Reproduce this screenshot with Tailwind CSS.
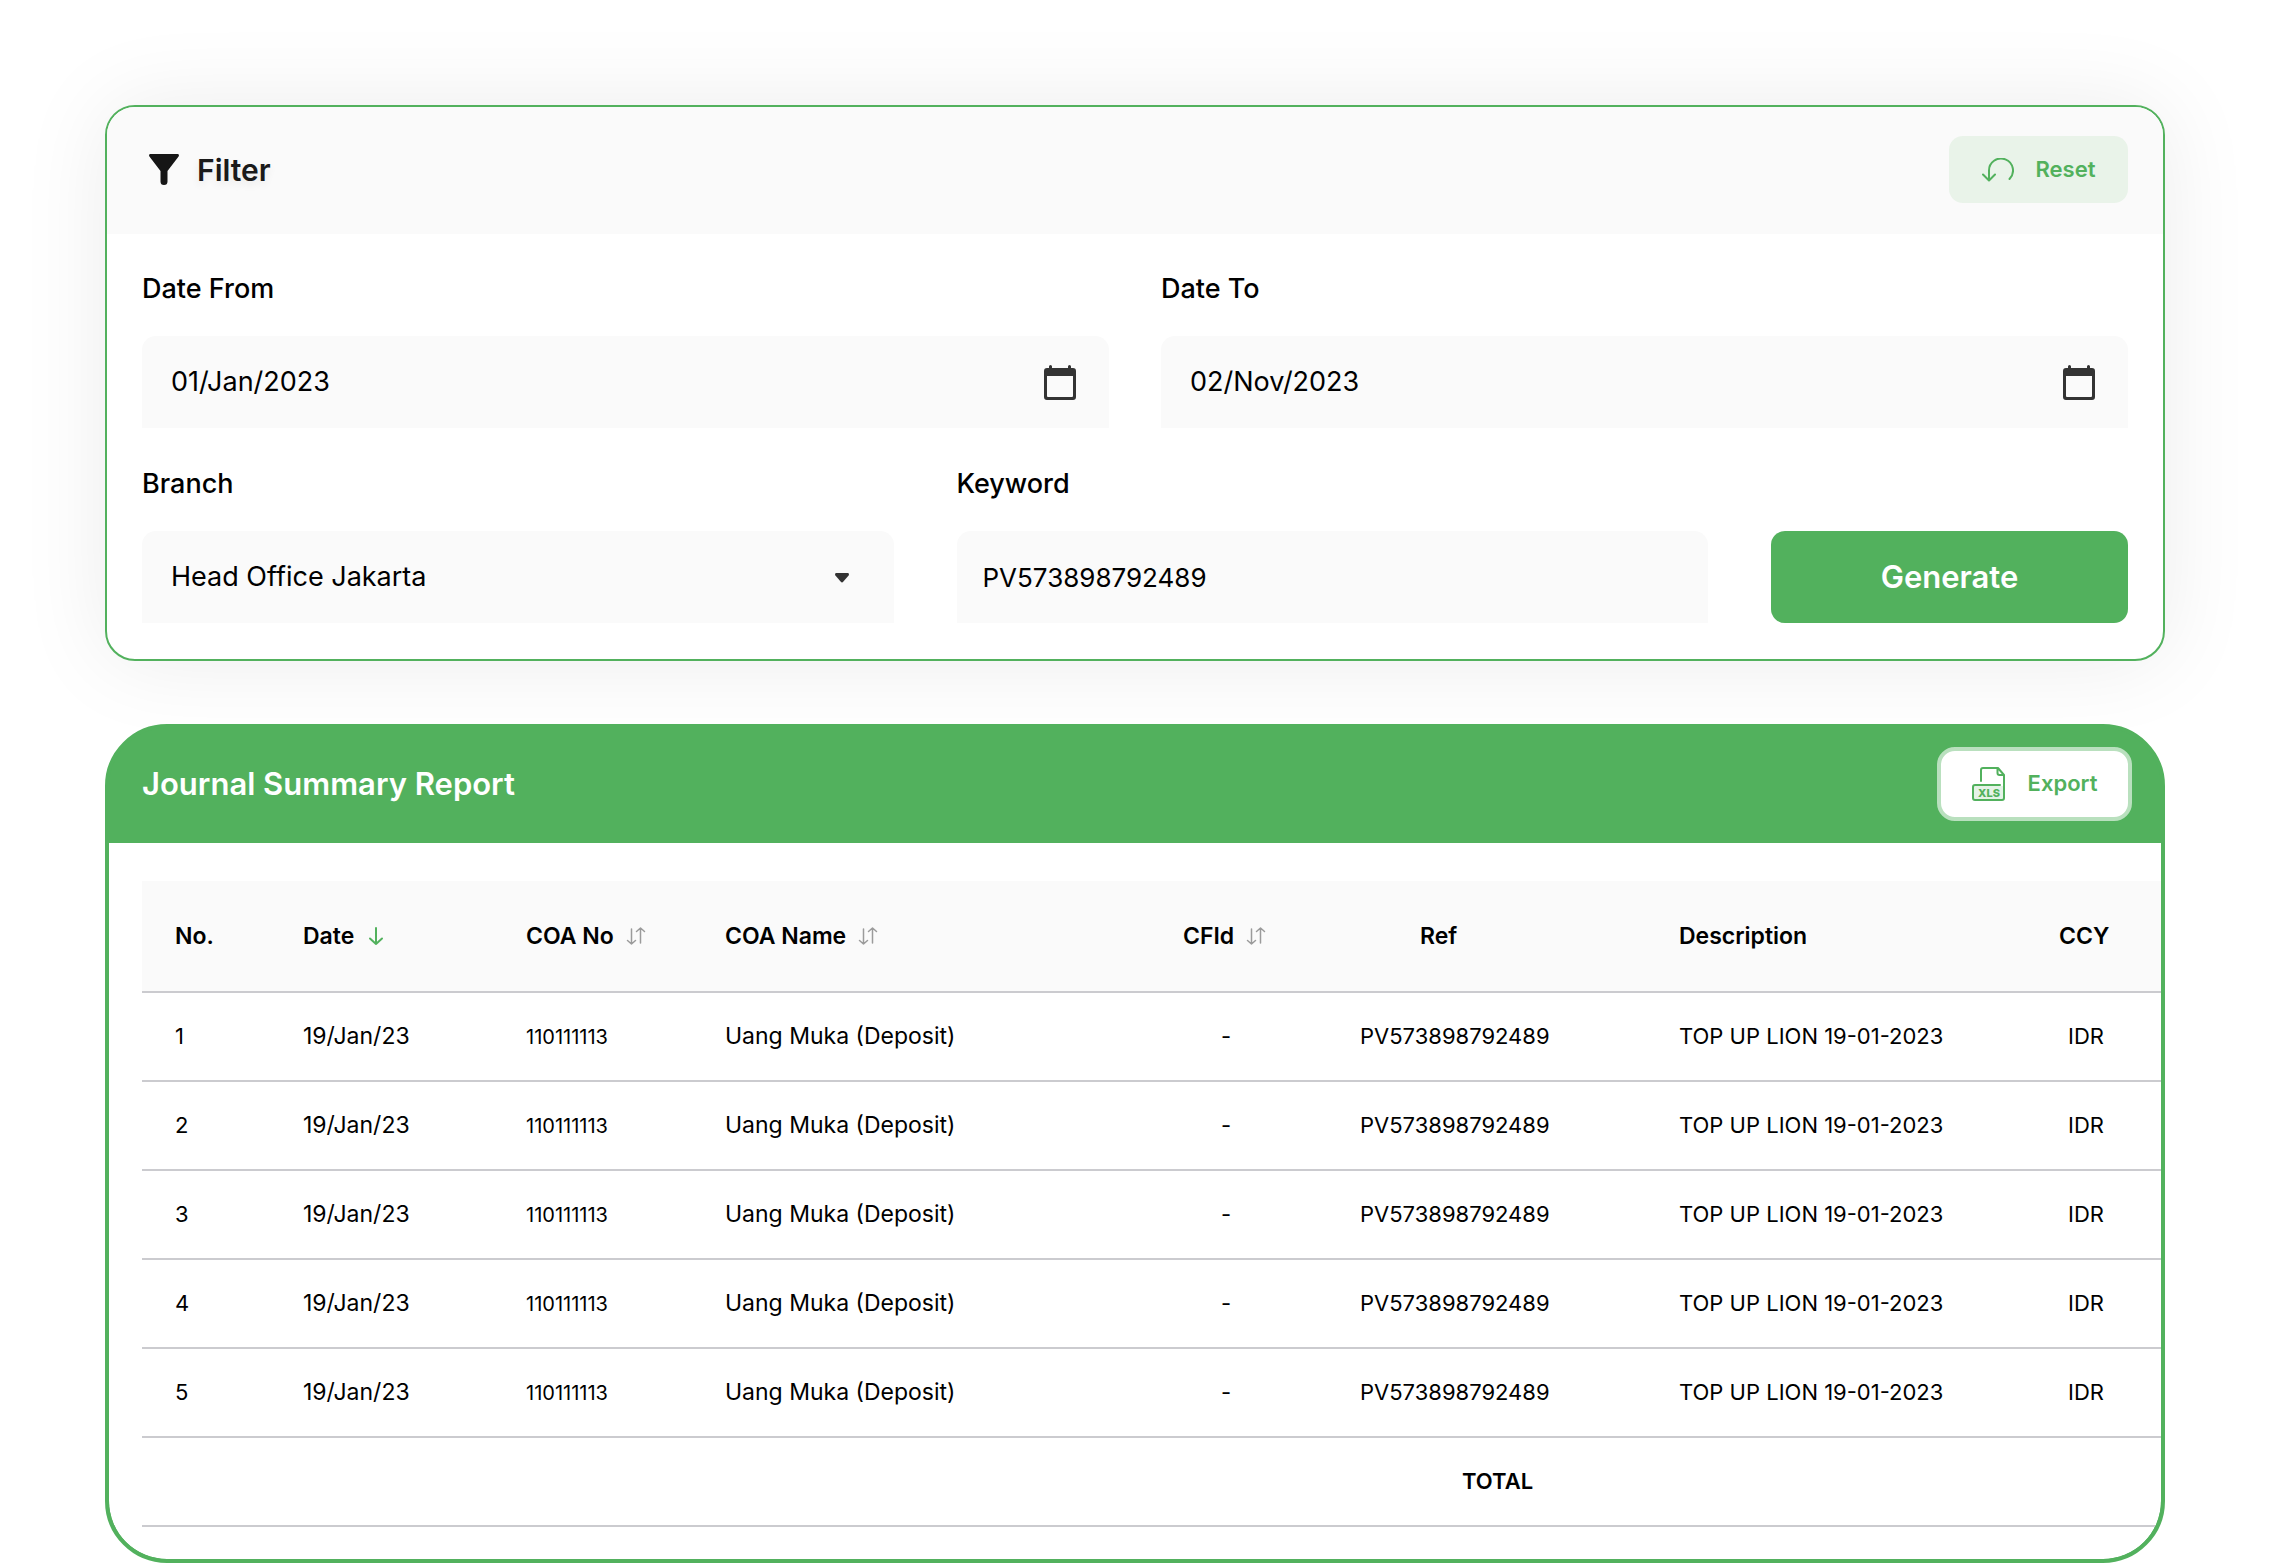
<!DOCTYPE html>
<html lang="en">
<head>
<meta charset="utf-8">
<meta name="viewport" content="width=device-width, initial-scale=1">
<title>Journal Summary Report</title>
<script src="https://cdn.jsdelivr.net/npm/@tailwindcss/browser@4"></script>
</head>
<body class="bg-white font-['Inter',sans-serif] text-black">
<svg class="hidden" aria-hidden="true">
  <symbol id="calendar" viewBox="0 0 32 35">
    <path fill="#333" fill-rule="evenodd" d="M5 1.5a1.5 1.5 0 0 1 3 0V3h16V1.500a1.500 1.500 0 0 1 3 0V3h2a3 3 0 0 1 3 3v26a3 3 0 0 1-3 3H3a3 3 0 0 1-3-3V6a3 3 0 0 1 3-3h2zM3 11v20a1 1 0 0 0 1 1h24a1 1 0 0 0 1-1V11z"/>
  </symbol>
  <symbol id="sort" viewBox="0 0 20 20">
    <path fill="none" stroke="#9b9b9b" stroke-width="1.500" stroke-linecap="round" stroke-linejoin="round" d="M5.500 3v15M1.500 14.500l4 3.500 4-3.500M14.500 17V2M10.500 5.500l4-3.500 4 3.500"/>
  </symbol>
</svg>
<main class="flex flex-col gap-[63px] pt-[105px] pr-[104px] pl-[105px]">

  <section class="overflow-hidden rounded-[30px] border-2 border-[#52b15d] bg-white shadow-[0_0_90px_rgb(0_0_0/0.08)]">
    <header class="flex h-[127px] items-center justify-between bg-[#fafafa] px-[35px] pb-[2px]">
      <h2 class="flex items-center gap-[18px] pl-[7px] text-[30px] leading-10 font-semibold text-[#1a1a1a] [text-shadow:0_4px_8px_rgb(0_0_0/0.08)]">
        <svg class="h-[31px] w-[30px]" viewBox="0 0 30 31" aria-hidden="true"><path fill="#161616" d="M1.500 0h27c1.300 0 1.900 1.300 1.100 2.400L18.500 17v10.500a3.500 3.500 0 0 1-7 0V17L.4 2.400C-.4 1.300.2 0 1.500 0z"/></svg>
        Filter
      </h2>
      <button type="button" class="flex h-[67px] w-[179px] items-center justify-center gap-[22px] rounded-[14px] bg-[#e9f3e9] text-[22px] font-semibold text-[#52b15d]">
        <svg class="h-6 w-8" viewBox="0 0 32 24" fill="none" stroke="currentColor" stroke-width="2" stroke-linecap="round" stroke-linejoin="round" aria-hidden="true"><path d="M7 22V13a12 12 0 1 1 20.500 8M1 16.500l6 6 6-6"/></svg>
        Reset
      </button>
    </header>
    <form class="flex flex-col gap-9 p-[35px] pb-9">
      <div class="grid grid-cols-2 gap-[52px]">
        <div class="flex flex-col gap-[27px]">
          <label for="from" class="text-[27px] leading-10 font-medium">Date From</label>
          <div class="flex h-[92px] items-center rounded-t-[14px] bg-[#fafafa] pr-[33px] pl-[29px]">
            <input id="from" type="text" value="01/Jan/2023" class="min-w-0 flex-1 text-[27px] outline-none">
            <button type="button" aria-label="Choose start date"><svg class="h-[35px] w-8"><use href="#calendar"/></svg></button>
          </div>
        </div>
        <div class="flex flex-col gap-[27px]">
          <label for="to" class="text-[27px] leading-10 font-medium">Date To</label>
          <div class="flex h-[92px] items-center rounded-t-[14px] bg-[#fafafa] pr-[33px] pl-[29px]">
            <input id="to" type="text" value="02/Nov/2023" class="min-w-0 flex-1 text-[27px] outline-none">
            <button type="button" aria-label="Choose end date"><svg class="h-[35px] w-8"><use href="#calendar"/></svg></button>
          </div>
        </div>
      </div>
      <div class="grid grid-cols-[1fr_1fr_357px] items-end gap-[63px]">
        <div class="flex flex-col gap-[27px]">
          <label for="branch" class="text-[27px] leading-10 font-medium">Branch</label>
          <div class="relative">
            <select id="branch" class="block h-[92px] w-full appearance-none rounded-t-[14px] bg-[#fafafa] px-[29px] text-[27px] outline-none"><option>Head Office Jakarta</option></select>
            <svg class="pointer-events-none absolute top-[42px] right-[45px] h-[10px] w-[14px]" viewBox="0 0 14 10" aria-hidden="true"><path fill="#333" d="M1.500 0h11C14 0 14.300 1.500 13.600 2.500L8.200 8.800c-.7.800-1.700.8-2.400 0L.4 2.500C-.3 1.500 0 0 1.500 0z"/></svg>
          </div>
        </div>
        <div class="flex flex-col gap-[27px]">
          <label for="keyword" class="text-[27px] leading-10 font-medium">Keyword</label>
          <input id="keyword" type="text" value="PV573898792489" class="h-[92px] rounded-t-[14px] bg-[#fafafa] px-[26px] text-[26px] outline-none">
        </div>
        <button type="submit" class="h-[92px] rounded-[14px] bg-[#52b15d] text-[31px] font-semibold text-white">Generate</button>
      </div>
    </form>
  </section>

  <section class="relative overflow-hidden rounded-[62px] border-4 border-[#52b15d] bg-[#52b15d]">
    <header class="flex h-[115px] items-center justify-between pr-[29px] pb-1 pl-[33px]">
      <h2 class="text-[31px] leading-10 font-semibold text-white">Journal Summary Report</h2>
      <button type="button" class="flex h-[74px] w-[195px] items-center justify-center gap-[23px] rounded-[18px] border-4 border-[#b9e0be] bg-white text-[22px] font-semibold text-[#52b15d]">
        <svg class="h-[34px] w-[33px]" viewBox="0 0 33 34" fill="none" stroke="currentColor" stroke-width="2" stroke-linecap="round" stroke-linejoin="round" aria-hidden="true">
          <path d="M9 14V3a2 2 0 0 1 2-2h15l6 7v23a2 2 0 0 1-2 2H3a2 2 0 0 1-2-2V20a2 2 0 0 1 2-2h25M25.500 1v5a2 2 0 0 0 2 2H32"/>
          <path d="M2 19h29v13H2z" fill="currentColor" fill-opacity=".15" stroke="none"/>
          <text x="17" y="30" text-anchor="middle" font-size="11" font-weight="800" fill="currentColor" stroke="none">XLS</text>
        </svg>
        Export
      </button>
    </header>
    <div class="overflow-hidden rounded-b-[58px] bg-white pt-[38px] pb-8 pl-[33px]">
      <table class="w-full table-fixed border-separate border-spacing-0 text-left text-[22px] [&_td]:h-[89px] [&_td]:border-b-2 [&_td]:border-[#cbcbcf] [&_td]:whitespace-nowrap [&_th]:h-[112px] [&_th]:border-b-2 [&_th]:border-[#cbcbcf] [&_th]:bg-[#fafafa] [&_th]:text-[23px] [&_th]:font-semibold [&_th]:whitespace-nowrap">
        <colgroup>
          <col class="w-[161px]"><col class="w-[223px]"><col class="w-[199px]"><col><col class="w-[177px]"><col class="w-[319px]"><col class="w-[380px]"><col class="w-[102px]">
        </colgroup>
        <thead>
          <tr>
            <th class="pl-[33px]">No.</th>
            <th><button type="button" class="flex items-center gap-3">Date <svg class="size-5" viewBox="0 0 20 20" fill="none" stroke="#52b15d" stroke-width="2" stroke-linecap="round" stroke-linejoin="round" aria-hidden="true"><path d="M10 2v16M4 12.500l6 5.500 6-5.500"/></svg></button></th>
            <th><button type="button" class="flex items-center gap-3">COA No <svg class="size-5" aria-hidden="true"><use href="#sort"/></svg></button></th>
            <th><button type="button" class="flex items-center gap-3">COA Name <svg class="size-5" aria-hidden="true"><use href="#sort"/></svg></button></th>
            <th><button type="button" class="flex items-center gap-3">CFId <svg class="size-5" aria-hidden="true"><use href="#sort"/></svg></button></th>
            <th class="pl-15">Ref</th>
            <th>Description</th>
            <th class="pr-[52px] text-center">CCY</th>
          </tr>
        </thead>
        <tbody>
          <tr><td class="pl-[33px]">1</td><td class="text-[23px]">19/Jan/23</td><td class="text-[20px]">110111113</td><td class="text-[23px]">Uang Muka (Deposit)</td><td class="pl-[38px]">-</td><td>PV573898792489</td><td>TOP UP LION 19-01-2023</td><td class="pr-[48px] text-center">IDR</td></tr>
          <tr><td class="pl-[33px]">2</td><td class="text-[23px]">19/Jan/23</td><td class="text-[20px]">110111113</td><td class="text-[23px]">Uang Muka (Deposit)</td><td class="pl-[38px]">-</td><td>PV573898792489</td><td>TOP UP LION 19-01-2023</td><td class="pr-[48px] text-center">IDR</td></tr>
          <tr><td class="pl-[33px]">3</td><td class="text-[23px]">19/Jan/23</td><td class="text-[20px]">110111113</td><td class="text-[23px]">Uang Muka (Deposit)</td><td class="pl-[38px]">-</td><td>PV573898792489</td><td>TOP UP LION 19-01-2023</td><td class="pr-[48px] text-center">IDR</td></tr>
          <tr><td class="pl-[33px]">4</td><td class="text-[23px]">19/Jan/23</td><td class="text-[20px]">110111113</td><td class="text-[23px]">Uang Muka (Deposit)</td><td class="pl-[38px]">-</td><td>PV573898792489</td><td>TOP UP LION 19-01-2023</td><td class="pr-[48px] text-center">IDR</td></tr>
          <tr><td class="pl-[33px]">5</td><td class="text-[23px]">19/Jan/23</td><td class="text-[20px]">110111113</td><td class="text-[23px]">Uang Muka (Deposit)</td><td class="pl-[38px]">-</td><td>PV573898792489</td><td>TOP UP LION 19-01-2023</td><td class="pr-[48px] text-center">IDR</td></tr>
        </tbody>
        <tfoot>
          <tr><td colspan="5"></td><td class="pl-[102px] font-semibold">TOTAL</td><td colspan="2"></td></tr>
        </tfoot>
      </table>
    </div>
  </section>
</main>
</body>
</html>
